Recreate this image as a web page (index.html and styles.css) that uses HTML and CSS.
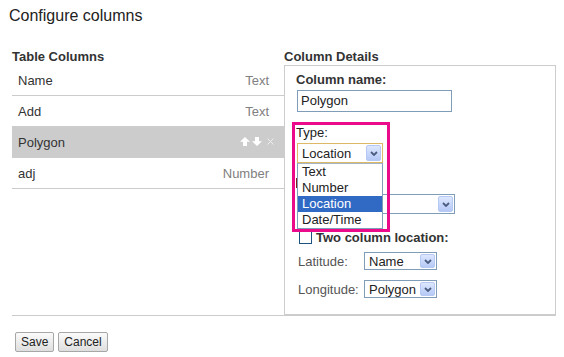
FILE: index.html
```html
<!DOCTYPE html>
<html>
<head>
<meta charset="utf-8">
<link rel="stylesheet" href="styles.css">
</head>
<body>
<div class="page">
  <h1 class="title">Configure columns</h1>
  <div class="main">
    <section class="col-left">
      <h2 class="head">Table Columns</h2>
      <ul class="list">
        <li class="row"><span class="name">Name</span><span class="type">Text</span></li>
        <li class="row"><span class="name">Add</span><span class="type">Text</span></li>
        <li class="row selected"><span class="name">Polygon</span>
          <span class="actions">
            <svg class="ico" width="10" height="9" viewBox="0 0 10 9"><path d="M5 0 L10 4.8 L7 4.8 L7 9 L3 9 L3 4.8 L0 4.8 Z" fill="#fff"/></svg>
            <svg class="ico" width="10" height="9" viewBox="0 0 10 9"><path d="M5 9 L10 4.2 L7 4.2 L7 0 L3 0 L3 4.2 L0 4.2 Z" fill="#fff"/></svg>
            <svg class="ico x" width="7" height="7" viewBox="0 0 7 7"><path d="M0.5 0.5 L6.5 6.5 M6.5 0.5 L0.5 6.5" stroke="#eee" stroke-width="1"/></svg>
          </span>
        </li>
        <li class="row"><span class="name">adj</span><span class="type">Number</span></li>
      </ul>
    </section>
    <section class="col-right">
      <h2 class="head">Column Details</h2>
      <div class="panel">
        <div class="field-label">Column name:</div>
        <div class="textbox">Polygon</div>
        <div class="type-label">Type:</div>
        <div class="select select-type"><span class="val">Location</span><span class="arrow"><svg width="8" height="5" viewBox="0 0 8 5"><path d="M1 1 L4 4 L7 1" fill="none" stroke="#4a5d80" stroke-width="1.8"/></svg></span></div>
        <div class="loc-mark"></div>
        <div class="select select-loc"><span class="val"></span><span class="arrow"><svg width="8" height="5" viewBox="0 0 8 5"><path d="M1 1 L4 4 L7 1" fill="none" stroke="#4a5d80" stroke-width="1.8"/></svg></span></div>
        <div class="check-row"><span class="checkbox"></span><span class="check-text">Two column location:</span></div>
        <div class="pair-row lat"><span class="pair-label">Latitude:</span><div class="select select-small"><span class="val">Name</span><span class="arrow"><svg width="8" height="5" viewBox="0 0 8 5"><path d="M1 1 L4 4 L7 1" fill="none" stroke="#4a5d80" stroke-width="1.8"/></svg></span></div></div>
        <div class="pair-row lon"><span class="pair-label">Longitude:</span><div class="select select-small"><span class="val">Polygon</span><span class="arrow"><svg width="8" height="5" viewBox="0 0 8 5"><path d="M1 1 L4 4 L7 1" fill="none" stroke="#4a5d80" stroke-width="1.8"/></svg></span></div></div>

        <div class="highlight"></div>
        <ul class="dropdown">
          <li>Text</li>
          <li>Number</li>
          <li class="on">Location</li>
          <li>Date/Time</li>
        </ul>
      </div>
    </section>
  </div>
  <div class="footer">
    <button class="btn">Save</button>
    <button class="btn">Cancel</button>
  </div>
</div>
</body>
</html>
```
FILE: styles.css
```css
body {
  margin: 0;
  background: #fff;
  font-family: "Liberation Sans", Arial, sans-serif;
  color: #333;
}
.page {
  width: 564px;
}
.title {
  margin: 0;
  padding: 6px 0 0 9px;
  font-size: 16px;
  line-height: 20px;
  font-weight: normal;
  color: #222;
}
.main {
  display: grid;
  grid-template-columns: 272px 272px;
  margin: 23px 0 0 12px;
}
.head {
  margin: 0 0 1px;
  font-size: 13px;
  line-height: 15px;
  font-weight: bold;
  color: #333;
}
.list {
  list-style: none;
  margin: 0;
  padding: 0;
}
.row {
  display: flex;
  align-items: center;
  justify-content: space-between;
  height: 30px;
  border-bottom: 1px solid #ccc;
  padding: 0 15px 0 6px;
  font-size: 13px;
}
.row .name {
  color: #333;
}
.row .type {
  color: #808080;
}
.row.selected {
  background: #ccc;
  padding-right: 10px;
}
.actions {
  display: flex;
  align-items: center;
  gap: 2px;
  margin-top: -2px;
}
.actions .x {
  margin-left: 3px;
}
.panel {
  position: relative;
  display: flex;
  flex-direction: column;
  align-items: flex-start;
  border: 1px solid #ccc;
  padding: 6px 11px 16px;
}
.field-label {
  font-size: 13px;
  line-height: 15px;
  font-weight: bold;
  color: #333;
}
.textbox {
  box-sizing: border-box;
  width: 155px;
  height: 22px;
  margin: 3px 0 0 1px;
  border: 1px solid #7f9db9;
  padding-left: 3px;
  font-size: 13px;
  line-height: 20px;
  color: #222;
}
.type-label {
  margin-top: 13px;
  font-size: 13px;
  line-height: 15px;
  color: #222;
}
.select {
  box-sizing: border-box;
  display: flex;
  align-items: center;
  background: #fff;
  border: 1px solid #7f9db9;
  padding: 0 1px 0 4px;
  font-size: 13px;
  color: #222;
}
.select .arrow {
  margin-left: auto;
  box-sizing: border-box;
  width: 15px;
  height: 16px;
  border: 1px solid #b6c9f4;
  border-radius: 2px;
  background: linear-gradient(#dde7fe, #b5c9f6);
  display: flex;
  align-items: center;
  justify-content: center;
}
.select-type {
  width: 86px;
  height: 20px;
  margin: 3px 0 0 1px;
  border-color: #dcb867;
}
.loc-mark {
  width: 2px;
  height: 10px;
  margin-top: 15px;
  background: #8b1a1a;
}
.select-loc {
  width: 158px;
  height: 20px;
  margin: 6px 0 0 1px;
}
.check-row {
  display: flex;
  align-items: center;
  margin: 16px 0 0 3px;
  height: 15px;
}
.checkbox {
  box-sizing: border-box;
  width: 13px;
  height: 13px;
  border: 1px solid #1c5180;
  background: #fff;
}
.check-text {
  margin-left: 4px;
  font-size: 13px;
  font-weight: bold;
  color: #333;
}
.pair-row {
  display: flex;
  align-items: center;
  margin-left: 2px;
}
.pair-row.lat {
  margin-top: 7px;
}
.pair-row.lon {
  margin-top: 10px;
}
.pair-label {
  width: 66px;
  font-size: 13px;
  color: #555;
}
.select-small {
  width: 73px;
  height: 18px;
  padding-right: 1px;
}
.select-small .arrow {
  height: 14px;
}
.highlight {
  position: absolute;
  left: 7px;
  top: 56px;
  width: 98px;
  height: 110px;
  box-sizing: border-box;
  border: 3px solid #ea0a8a;
}
.dropdown {
  position: absolute;
  left: 12px;
  top: 97px;
  width: 86px;
  box-sizing: border-box;
  margin: 0;
  padding: 0;
  list-style: none;
  background: #fff;
  border: 1px solid #7f9db9;
  border-top-color: #a5b5c6;
}
.dropdown li {
  height: 16px;
  line-height: 16px;
  padding-left: 4px;
  font-size: 13px;
  color: #222;
}
.dropdown li.on {
  background: #316ac5;
  color: #fff;
}
.footer {
  display: flex;
  gap: 4px;
  margin-left: 12px;
  width: 544px;
  border-top: 1px solid #ccc;
  padding: 16px 0 0 3px;
  box-sizing: border-box;
}
.btn {
  box-sizing: border-box;
  height: 20px;
  padding: 0 5px;
  font-family: "Liberation Sans", Arial, sans-serif;
  font-size: 12px;
  color: #222;
  border: 1px solid #a7a7a7;
  border-radius: 2px;
  background: linear-gradient(#fbfbfb, #dedede);
}
```
